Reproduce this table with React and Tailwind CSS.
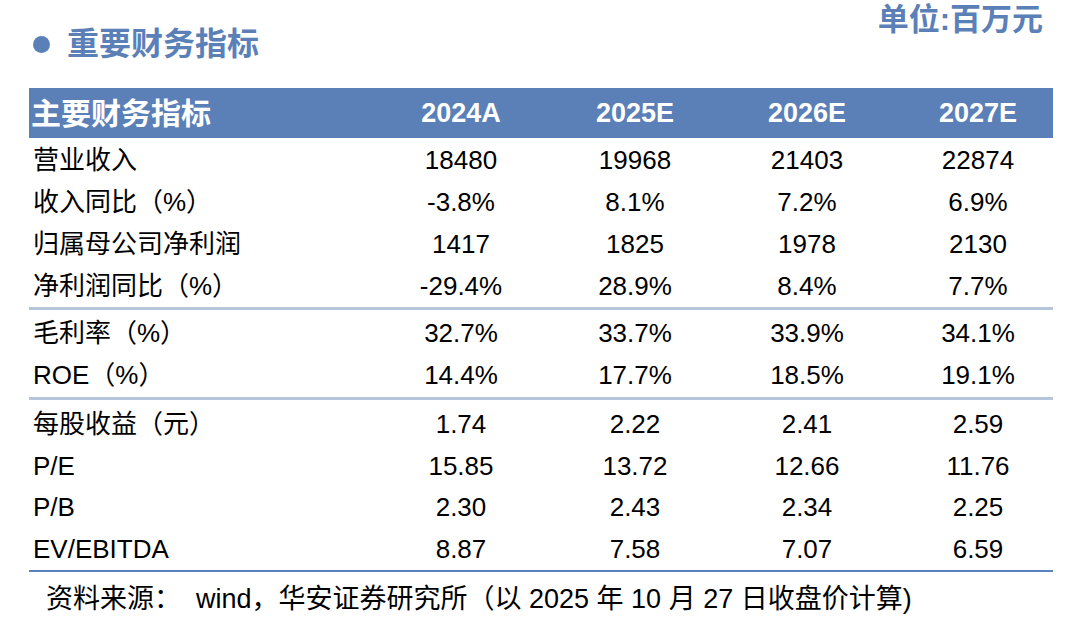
const HEAD = ["2024A", "2025E", "2026E", "2027E"];

const GROUPS = [
  [
    ["营业收入", "18480", "19968", "21403", "22874"],
    ["收入同比（%）", "-3.8%", "8.1%", "7.2%", "6.9%"],
    ["归属母公司净利润", "1417", "1825", "1978", "2130"],
    ["净利润同比（%）", "-29.4%", "28.9%", "8.4%", "7.7%"],
  ],
  [
    ["毛利率（%）", "32.7%", "33.7%", "33.9%", "34.1%"],
    ["ROE（%）", "14.4%", "17.7%", "18.5%", "19.1%"],
  ],
  [
    ["每股收益（元）", "1.74", "2.22", "2.41", "2.59"],
    ["P/E", "15.85", "13.72", "12.66", "11.76"],
    ["P/B", "2.30", "2.43", "2.34", "2.25"],
    ["EV/EBITDA", "8.87", "7.58", "7.07", "6.59"],
  ],
];

const FONT = { fontFamily: '"Liberation Sans", "Noto Sans CJK SC", Arial, sans-serif' };
const COLS = "grid grid-cols-[346px_172px_176px_168px_162px]";

function Row({ cells, h }) {
  return (
    <div className={`${COLS} items-center ${h} text-[26px] text-black`}>
      <div className="pl-[4px] whitespace-nowrap">{cells[0]}</div>
      {cells.slice(1).map((c, i) => (
        <div key={i} className={`text-center ${i === 3 ? "pl-[12px]" : ""}`}>{c}</div>
      ))}
    </div>
  );
}

export default function App() {
  return (
    <div className="w-[1080px] h-[642px] bg-white relative overflow-hidden" style={FONT}>
      <div className="flex items-start justify-between h-[88px]">
        <div className="flex items-center pl-[33px] pt-[27px]">
          <span className="w-[17px] h-[17px] rounded-full bg-[#5b80b8]" />
          <span className="ml-[17px] text-[32px] font-bold text-[#5b80b8] leading-[34px]">重要财务指标</span>
        </div>
        <div className="pt-[3px] pr-[37px] text-[31px] font-bold text-[#5b80b8] leading-[34px]">单位:百万元</div>
      </div>

      <div className="ml-[29px] w-[1024px]">
        <div className={`${COLS} items-center h-[50px] bg-[#5b80b7] text-white font-bold text-[27px]`}>
          <div className="pl-[2px] text-[30px]">主要财务指标</div>
          {HEAD.map((t, i) => (
            <div key={t} className={`text-center ${i === 3 ? "pl-[12px]" : ""}`}>{t}</div>
          ))}
        </div>

        <div className="pt-[1px]">
          {GROUPS[0].map((r) => <Row key={r[0]} cells={r} h="h-[42px]" />)}
        </div>
        <div className="h-[3px] bg-[#b6c4dc]" />
        <div className="pt-[2px]">
          {GROUPS[1].map((r) => <Row key={r[0]} cells={r} h="h-[42.5px]" />)}
        </div>
        <div className="h-[3px] bg-[#b6c4dc]" />
        <div className="pt-[4px]">
          {GROUPS[2].map((r) => <Row key={r[0]} cells={r} h="h-[41.5px]" />)}
        </div>
        <div className="h-[2px] bg-[#5a82c0]" />
      </div>

      <div className="pl-[46px] pt-[11px] text-[27px] text-black leading-[32px] whitespace-pre">
        资料来源：  wind，华安证券研究所（以 2025 年 10 月 27 日收盘价计算)
      </div>
    </div>
  );
}
